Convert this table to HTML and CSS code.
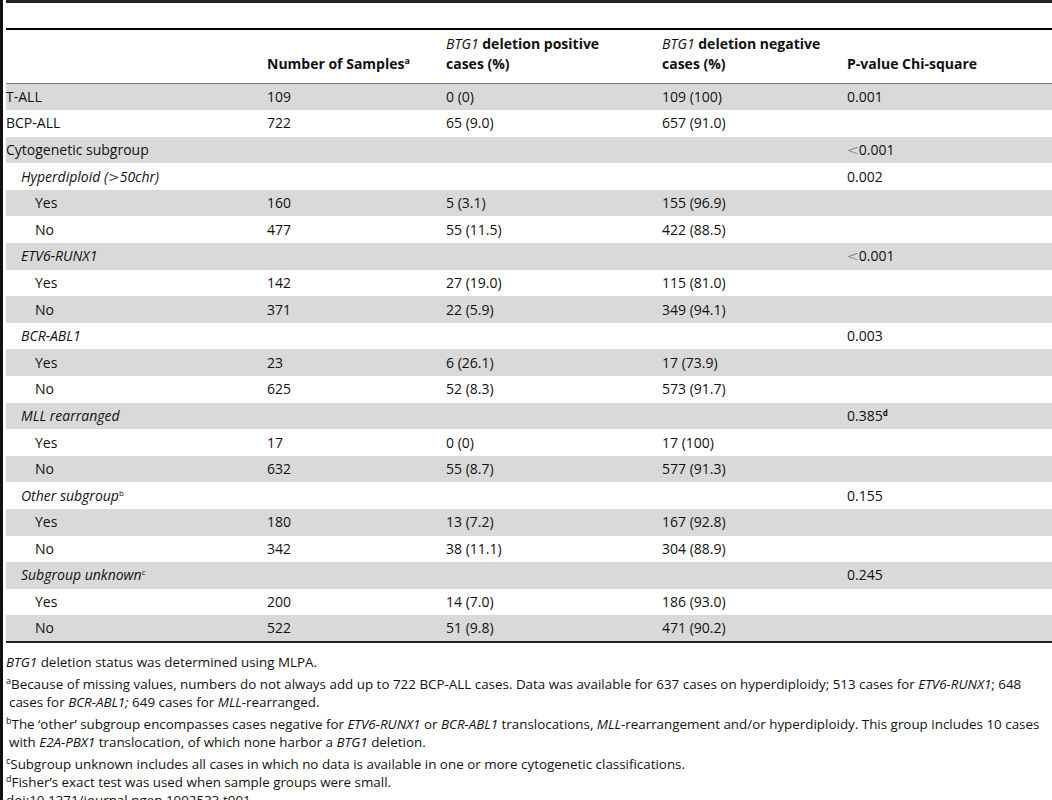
FILE: index.html
```html
<html>
    <head>
        <meta charset="utf-8" />
        <title>BTG1 deletions in pediatric ALL subgroups</title>
        <link rel="stylesheet" href="styles.css">
    </head>
    <body>
        <div class="page">
            <div class="topbar"></div>
            <div class="caption"></div>
            <table class="data">
                <thead>
                    <tr>
                        <th class="c1"></th>
                        <th class="c2">Number of Samples<sup>a</sup></th>
                        <th class="c3"><i>BTG1</i> deletion positive cases (%)</th>
                        <th class="c4"><i>BTG1</i> deletion negative cases (%)</th>
                        <th class="c5">P-value Chi-square</th>
                    </tr>
                </thead>
                <tbody>
                    <tr class="g"><td>T-ALL</td><td>109</td><td>0 (0)</td><td>109 (100)</td><td>0.001</td></tr>
                    <tr><td>BCP-ALL</td><td>722</td><td>65 (9.0)</td><td>657 (91.0)</td><td></td></tr>
                    <tr class="g"><td>Cytogenetic subgroup</td><td></td><td></td><td></td><td><span class="lt">&lt;</span>0.001</td></tr>
                    <tr><td class="sub"><i>Hyperdiploid (<span class="lt">&gt;</span>50chr)</i></td><td></td><td></td><td></td><td>0.002</td></tr>
                    <tr class="g"><td class="opt">Yes</td><td>160</td><td>5 (3.1)</td><td>155 (96.9)</td><td></td></tr>
                    <tr><td class="opt">No</td><td>477</td><td>55 (11.5)</td><td>422 (88.5)</td><td></td></tr>
                    <tr class="g"><td class="sub"><i>ETV6-RUNX1</i></td><td></td><td></td><td></td><td><span class="lt">&lt;</span>0.001</td></tr>
                    <tr><td class="opt">Yes</td><td>142</td><td>27 (19.0)</td><td>115 (81.0)</td><td></td></tr>
                    <tr class="g"><td class="opt">No</td><td>371</td><td>22 (5.9)</td><td>349 (94.1)</td><td></td></tr>
                    <tr><td class="sub"><i>BCR-ABL1</i></td><td></td><td></td><td></td><td>0.003</td></tr>
                    <tr class="g"><td class="opt">Yes</td><td>23</td><td>6 (26.1)</td><td>17 (73.9)</td><td></td></tr>
                    <tr><td class="opt">No</td><td>625</td><td>52 (8.3)</td><td>573 (91.7)</td><td></td></tr>
                    <tr class="g"><td class="sub"><i>MLL rearranged</i></td><td></td><td></td><td></td><td>0.385<sup><b>d</b></sup></td></tr>
                    <tr><td class="opt">Yes</td><td>17</td><td>0 (0)</td><td>17 (100)</td><td></td></tr>
                    <tr class="g"><td class="opt">No</td><td>632</td><td>55 (8.7)</td><td>577 (91.3)</td><td></td></tr>
                    <tr><td class="sub"><i>Other subgroup</i><sup>b</sup></td><td></td><td></td><td></td><td>0.155</td></tr>
                    <tr class="g"><td class="opt">Yes</td><td>180</td><td>13 (7.2)</td><td>167 (92.8)</td><td></td></tr>
                    <tr><td class="opt">No</td><td>342</td><td>38 (11.1)</td><td>304 (88.9)</td><td></td></tr>
                    <tr class="g"><td class="sub"><i>Subgroup unknown</i><sup>c</sup></td><td></td><td></td><td></td><td>0.245</td></tr>
                    <tr><td class="opt">Yes</td><td>200</td><td>14 (7.0)</td><td>186 (93.0)</td><td></td></tr>
                    <tr class="g"><td class="opt">No</td><td>522</td><td>51 (9.8)</td><td>471 (90.2)</td><td></td></tr>
                </tbody>
            </table>
            <div class="notes">
                <p><i>BTG1</i> deletion status was determined using MLPA.</p>
                <p class="fn"><sup>a</sup>Because of missing values, numbers do not always add up to 722 BCP-ALL cases. Data was available for 637 cases on hyperdiploidy; 513 cases for <i>ETV6-RUNX1</i>; 648 cases for <i>BCR-ABL1;</i> 649 cases for <i>MLL</i>-rearranged.</p>
                <p class="fn"><sup>b</sup>The ‘other’ subgroup encompasses cases negative for <i>ETV6-RUNX1</i> or <i>BCR-ABL1</i> translocations, <i>MLL</i>-rearrangement and/or hyperdiploidy. This group includes 10 cases with <i>E2A-PBX1</i> translocation, of which none harbor a <i>BTG1</i> deletion.</p>
                <p class="fn"><sup>c</sup>Subgroup unknown includes all cases in which no data is available in one or more cytogenetic classifications.</p>
                <p class="fn last"><sup>d</sup>Fisher’s exact test was used when sample groups were small.</p>
                <p>doi:10.1371/journal.pgen.1002533.t001</p>
            </div>
        </div>
    </body>
</html>
```

FILE: styles.css
```css
body {
    margin: 0;
    font-family: "Open Sans", "Liberation Sans", sans-serif;
    font-size: 13.4px;
    color: #111;
    background: #fff;
}
.page {
    border-left: 3px solid #111;
    padding-left: 3px;
    height: 800px;
    overflow: hidden;
}
.topbar {
    height: 3px;
    background-color: #222;
}
.caption {
    height: 25px;
}
.data {
    width: 100%;
    border-collapse: collapse;
    border-top: 2px solid #000;
    border-bottom: 2px solid #222;
    font-size: 14px;
}
.data th {
    text-align: left;
    vertical-align: bottom;
    font-weight: bold;
    padding: 4px 6px 9px 0;
    height: 40px;
    line-height: 20px;
    border-bottom: 1px solid #777;
}
.data th i {
    font-weight: normal;
}
.data th sup {
    font-size: 9px;
}
.c1 { width: 255px; }
.c2 { width: 173px; }
.data th.c3 {
    width: 190px;
    padding-right: 26px;
}
.c4 { width: 179px; }
.data td {
    height: 26.6px;
    padding: 0 6px 0 0;
    line-height: 18px;
}
.data tr.g td {
    background-color: #d9d9d9;
}
td.sub {
    padding-left: 15px;
}
td.opt {
    padding-left: 29px;
}
.lt {
    font-family: "DejaVu Sans", sans-serif;
    font-weight: 200;
    font-size: 14px;
    color: #555;
}
sup {
    font-size: 8px;
    line-height: 0;
    vertical-align: 5px;
}
.notes {
    padding-top: 10px;
    line-height: 18px;
}
.notes sup {
    font-size: 9px;
}
.notes p {
    margin: 0;
}
.notes p.fn {
    margin-top: 4px;
    padding-left: 3px;
    text-indent: -3px;
}
.notes p.last {
    margin-top: 0;
}
```
